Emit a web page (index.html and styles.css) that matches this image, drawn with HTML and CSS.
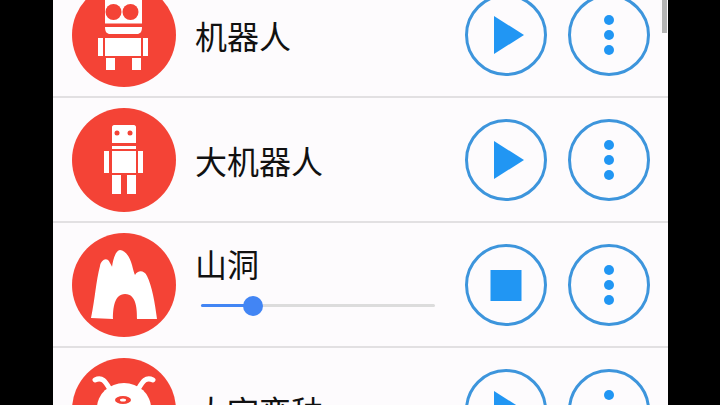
FILE: index.html
```html
<!DOCTYPE html>
<html lang="zh">
<head>
<meta charset="utf-8">
<title>声音列表</title>
<link rel="stylesheet" href="styles.css">
</head>
<body>
<main class="panel">
  <div class="scrollbar"></div>
  <ul class="list">
    <li class="row">
      <div class="avatar">
        <svg viewBox="0 0 104 104" class="art">
          <path fill="#fff" d="M33 5C33 3 35 1 37 1H66C68 1 70 3 70 5V41H33Z"/>
          <circle cx="41.5" cy="29" r="8" fill="#f44336"/><circle cx="58.5" cy="29" r="8" fill="#f44336"/>
          <path fill="#f44336" d="M33 40.5H70V44H33Z"/>
          <path fill="#fff" d="M33 44H70C70 49 68 51 65 51H38C35 51 33 49 33 44Z"/>
          <path fill="#fff" d="M26 55H31V73H26ZM33 55H69V73H33ZM71 55H76V73H71ZM34 75H43V87H34ZM60 75H69V87H60Z"/>
        </svg>
      </div>
      <div class="info"><h2 class="title">机器人</h2></div>
      <div class="actions">
        <button class="round"><svg viewBox="0 0 82 82" class="glyph"><path d="M29 22 59 41 29 60Z"/></svg></button>
        <button class="round"><svg viewBox="0 0 82 82" class="glyph"><circle cx="41" cy="26" r="5"/><circle cx="41" cy="41" r="5"/><circle cx="41" cy="56" r="5"/></svg></button>
      </div>
    </li>
    <li class="row">
      <div class="avatar">
        <svg viewBox="0 0 104 104" class="art">
          <path fill="#fff" d="M40 19C40 18 41 17 42 17H62C63 17 64 18 64 19V35H40Z"/>
          <circle cx="45" cy="25" r="2.5" fill="#f44336"/><circle cx="58" cy="25" r="2.5" fill="#f44336"/>
          <path fill="#fff" d="M40 38H64V41H40Z"/>
          <path fill="#fff" d="M32 43H37V65H32ZM40 43H64V65H40ZM66 43H71V65H66ZM40 67H49V86H40ZM55 67H64V86H55Z"/>
        </svg>
      </div>
      <div class="info"><h2 class="title">大机器人</h2></div>
      <div class="actions">
        <button class="round"><svg viewBox="0 0 82 82" class="glyph"><path d="M29 22 59 41 29 60Z"/></svg></button>
        <button class="round"><svg viewBox="0 0 82 82" class="glyph"><circle cx="41" cy="26" r="5"/><circle cx="41" cy="41" r="5"/><circle cx="41" cy="56" r="5"/></svg></button>
      </div>
    </li>
    <li class="row">
      <div class="avatar">
        <svg viewBox="0 0 104 104" class="art">
          <path fill="#fff" d="M19 85C23 66 24 48 28 33C29 27 35 23 38 30C39 32 40 33 40 34C41 26 44 17 48 17C53 17 58 24 60 32C61 36 62 40 63 42C66 37 72 37 75 43C80 53 83 70 85 86L65 86C65 78 65 61 53 61C42 61 41 76 41 86Z"/>
        </svg>
      </div>
      <div class="info">
        <h2 class="title title-tight">山洞</h2>
        <div class="slider"><div class="slider-fill"></div><div class="slider-thumb"></div></div>
      </div>
      <div class="actions">
        <button class="round"><svg viewBox="0 0 82 82" class="glyph"><rect x="25.5" y="26" width="31" height="31"/></svg></button>
        <button class="round"><svg viewBox="0 0 82 82" class="glyph"><circle cx="41" cy="26" r="5"/><circle cx="41" cy="41" r="5"/><circle cx="41" cy="56" r="5"/></svg></button>
      </div>
    </li>
    <li class="row">
      <div class="avatar">
        <svg viewBox="0 0 104 104" class="art">
          <path fill="none" stroke="#fff" stroke-width="5" stroke-linecap="round" d="M23 22C31 18 34 25 39 33M81 22C73 18 70 25 65 33"/>
          <ellipse cx="52" cy="50" rx="27" ry="25" fill="#fff"/>
          <ellipse cx="51" cy="42" rx="8" ry="4" fill="#f44336"/>
          <ellipse cx="51" cy="42" rx="3" ry="1.5" fill="#fff"/>
        </svg>
      </div>
      <div class="info"><h2 class="title">太空变种</h2></div>
      <div class="actions">
        <button class="round"><svg viewBox="0 0 82 82" class="glyph"><path d="M29 22 59 41 29 60Z"/></svg></button>
        <button class="round"><svg viewBox="0 0 82 82" class="glyph"><circle cx="41" cy="26" r="5"/><circle cx="41" cy="41" r="5"/><circle cx="41" cy="56" r="5"/></svg></button>
      </div>
    </li>
  </ul>
</main>
</body>
</html>
```
FILE: styles.css
```css
* { box-sizing: border-box; }
html, body { margin: 0; height: 100%; }
body { background: #000; overflow: hidden; display: flex; padding-left: 53px; }
.panel { position: relative; width: 615px; height: 405px; background: #fdfbfd; overflow: hidden; font-family: "Noto Sans CJK SC", "Noto Sans", sans-serif; }
.scrollbar { position: absolute; top: 0; right: 1px; width: 5px; height: 33px; background: #b4b4b4; }
.list { list-style: none; margin: -27px 0 0; padding: 0; }
.row { height: 125px; display: flex; align-items: center; padding: 0 18px 0 19px; border-bottom: 2px solid #e2e0e2; }
.avatar { width: 104px; height: 104px; border-radius: 50%; background: #f44336; flex: none; overflow: hidden; }
.art { display: block; width: 104px; height: 104px; }
.info { flex: 1; margin-left: 19px; min-width: 0; }
.title { margin: 0; font-size: 32px; font-weight: 400; line-height: 40px; color: #111; }
.title-tight { margin-bottom: 21px; }
.slider { position: relative; width: 234px; height: 3px; margin: 0 0 19px 6px; background: #dcdcdc; border-radius: 2px; }
.slider-fill { width: 52px; height: 3px; background: #4285f4; border-radius: 2px; }
.slider-thumb { position: absolute; left: 42px; top: -8.5px; width: 20px; height: 20px; border-radius: 50%; background: #4285f4; }
.actions { display: flex; gap: 21px; flex: none; }
.round { width: 82px; height: 82px; padding: 0; border: 3px solid #3d95dc; border-radius: 50%; background: transparent; display: flex; align-items: center; justify-content: center; }
.glyph { display: block; width: 82px; height: 82px; flex: none; fill: #2196f3; }
```
